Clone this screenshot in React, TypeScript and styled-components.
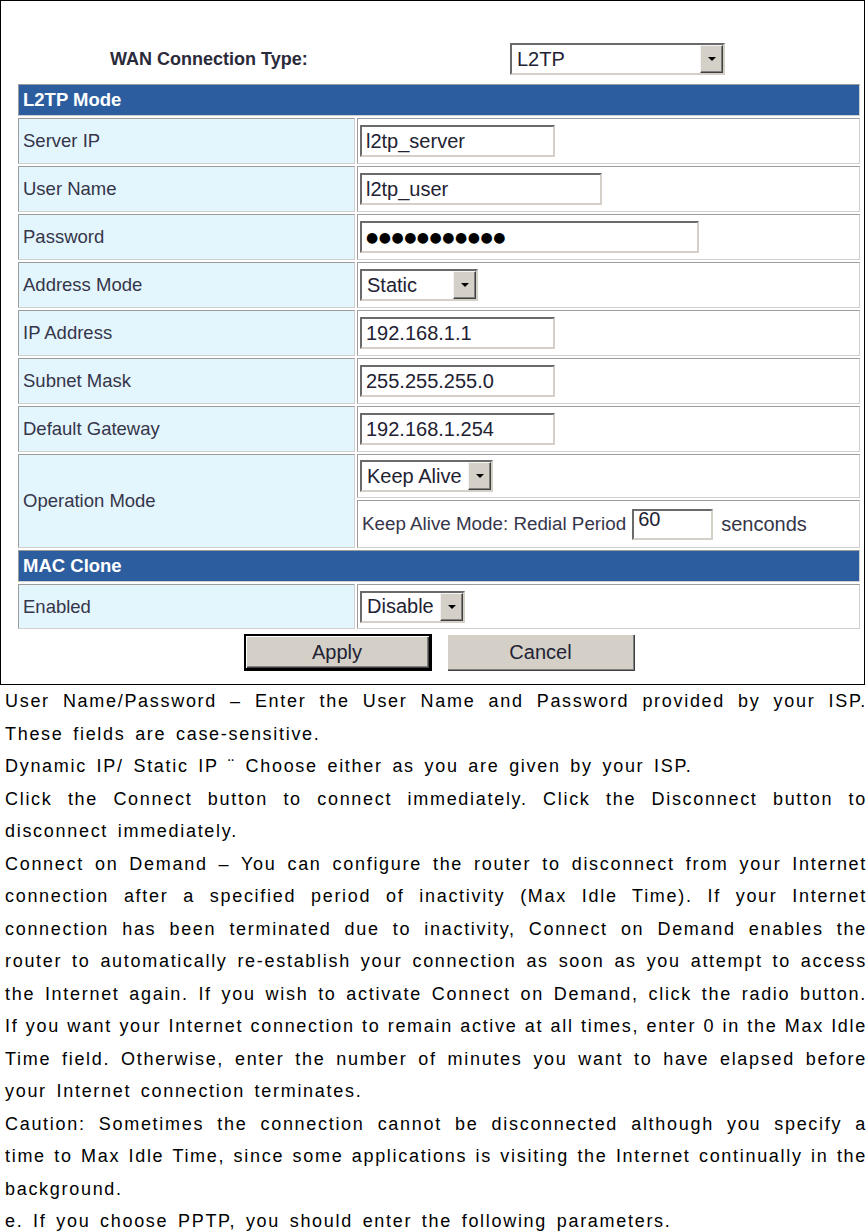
import React from "react";
import styled, { createGlobalStyle, css } from "styled-components";

const GlobalStyle = createGlobalStyle`
  html, body { margin: 0; padding: 0; background: #fff; }
  body { font-family: "Liberation Sans", Arial, sans-serif; }
`;

const Page = styled.div`
  width: 868px;
`;

const Frame = styled.div`
  box-sizing: border-box;
  width: 865px;
  height: 685px;
  border: 1px solid #000;
  padding-top: 42px;
`;

const TypeRow = styled.div`
  display: flex;
  align-items: center;
  height: 32px;
  padding-left: 109px;
`;

const TypeLabel = styled.div`
  width: 400px;
  font-size: 18px;
  font-weight: bold;
  color: #2a2a3a;
`;

const Grid = styled.div`
  display: grid;
  grid-template-columns: 337px 503px;
  grid-template-rows: 32px repeat(7, 46px) 44px 48px 32px 45px;
  gap: 2px;
  padding: 2px;
  width: 846px;
  box-sizing: border-box;
  margin: 7px 0 0 15px;
`;

const cellBase = css`
  box-sizing: border-box;
  border: 1px solid;
  border-color: #9c9c9c #d0d0d0 #d0d0d0 #9c9c9c;
  display: flex;
  align-items: center;
  min-width: 0;
`;

const SectionHeader = styled.div`
  ${cellBase};
  grid-column: 1 / -1;
  background: #2c5d9f;
  color: #fff;
  font-weight: bold;
  font-size: 18.5px;
  padding-left: 4px;
`;

const LabelCell = styled.div<{ $rows?: number }>`
  ${cellBase};
  background: #e4f6fd;
  color: #35354a;
  font-size: 18.5px;
  padding-left: 4px;
  ${(p) => p.$rows && css`grid-row: span ${p.$rows};`}
`;

const ValueCell = styled.div`
  ${cellBase};
  background: #fff;
  padding-left: 2px;
  color: #35354a;
  font-size: 18.5px;
`;

const sunken = css`
  box-sizing: border-box;
  border: 2px solid;
  border-color: #6a6a6a #d4d0c8 #d4d0c8 #6a6a6a;
  background: #fff;
`;

const TextInput = styled.input<{ $w: number; $h?: number; $high?: boolean; $dots?: boolean }>`
  ${sunken};
  width: ${(p) => p.$w}px;
  height: ${(p) => p.$h ?? 32}px;
  margin: 0;
  padding: 0 4px;
  font-family: "Liberation Sans", Arial, sans-serif;
  font-size: 20px;
  color: #222233;
  outline: none;
  ${(p) =>
    p.$high &&
    css`
      padding-bottom: 10px;
    `}
  ${(p) =>
    p.$dots &&
    css`
      font-family: "DejaVu Sans", sans-serif;
      font-size: 14px;
      letter-spacing: 0.5px;
      color: #000;
    `}
`;

const SelectBox = styled.div<{ $w: number }>`
  ${sunken};
  width: ${(p) => p.$w}px;
  height: 32px;
  display: flex;
  align-items: stretch;
`;

const SelectText = styled.span`
  flex: 1;
  display: flex;
  align-items: center;
  padding-left: 5px;
  font-size: 20px;
  color: #222233;
  white-space: nowrap;
`;

const ArrowButton = styled.span`
  box-sizing: border-box;
  width: 23px;
  background: #d4d0c8;
  border: 1px solid;
  border-color: #f4f4f4 #404040 #404040 #f4f4f4;
  box-shadow: inset -1px -1px 0 #808080;
  display: flex;
  align-items: center;
  justify-content: center;
  &::after {
    content: "";
    width: 0;
    height: 0;
    border-left: 4px solid transparent;
    border-right: 4px solid transparent;
    border-top: 4px solid #000;
  }
`;

const InlineText = styled.span<{ $big?: boolean }>`
  margin-left: 2px;
  font-size: ${(p) => (p.$big ? 20 : 18.8)}px;
  color: #35354a;
  white-space: nowrap;
`;

const RedialGroup = styled.div`
  display: flex;
  align-items: center;
  gap: 6px;
`;

const ButtonRow = styled.div`
  display: flex;
  justify-content: center;
  gap: 15px;
  width: 846px;
  margin: 3px 0 0 15px;
`;

const Button = styled.button<{ $primary?: boolean }>`
  box-sizing: border-box;
  width: 188px;
  height: 37px;
  margin: 0;
  padding: 0;
  background: #d4d0c8;
  font-family: "Liberation Sans", Arial, sans-serif;
  font-size: 20px;
  color: #222233;
  border: none;
  box-shadow: inset 1px 1px 0 #ffffff, inset -1px -1px 0 #404040, inset -2px -2px 0 #808080;
  ${(p) =>
    p.$primary &&
    css`
      border: 2px solid #000;
      border-right-width: 3px;
      border-bottom-width: 3px;
    `}
`;

const TextBlock = styled.div`
  padding-left: 5px;
  width: 862px;
  font-family: "Liberation Sans", Arial, sans-serif;
  font-size: 18px;
  letter-spacing: 1.7px;
  word-spacing: 3px;
  line-height: 32.5px;
  color: #000;
`;

const Line = styled.div<{ $fill?: boolean; $tight?: boolean }>`
  text-align: ${(p) => (p.$fill ? "justify" : "left")};
  text-align-last: ${(p) => (p.$fill ? "justify" : "left")};
  ${(p) => p.$tight && css`word-spacing: -1px;`}
`;

function Select({ w, value }: { w: number; value: string }) {
  return (
    <SelectBox $w={w}>
      <SelectText>{value}</SelectText>
      <ArrowButton />
    </SelectBox>
  );
}

const inputRows: { label: string; value: string; w: number; kind?: "dots" | "select" }[] = [
  { label: "Server IP", value: "l2tp_server", w: 195 },
  { label: "User Name", value: "l2tp_user", w: 242 },
  { label: "Password", value: "●●●●●●●●●●●", w: 339, kind: "dots" },
  { label: "Address Mode", value: "Static", w: 118, kind: "select" },
  { label: "IP Address", value: "192.168.1.1", w: 195 },
  { label: "Subnet Mask", value: "255.255.255.0", w: 195 },
  { label: "Default Gateway", value: "192.168.1.254", w: 195 },
];

const lines: { t: string; fill?: boolean; tight?: boolean }[] = [
  { t: "User Name/Password – Enter the User Name and Password provided by your ISP.", fill: true },
  { t: "These fields are case-sensitive." },
  { t: "Dynamic IP/ Static IP ¨ Choose either as you are given by your ISP." },
  { t: "Click the Connect button to connect immediately. Click the Disconnect button to", fill: true },
  { t: "disconnect immediately." },
  { t: "Connect on Demand – You can configure the router to disconnect from your Internet", fill: true },
  { t: "connection after a specified period of inactivity (Max Idle Time). If your Internet", fill: true },
  { t: "connection has been terminated due to inactivity, Connect on Demand enables the", fill: true },
  { t: "router to automatically re-establish your connection as soon as you attempt to access", fill: true, tight: true },
  { t: "the Internet again. If you wish to activate Connect on Demand, click the radio button.", fill: true, tight: true },
  { t: "If you want your Internet connection to remain active at all times, enter 0 in the Max Idle", fill: true, tight: true },
  { t: "Time field. Otherwise, enter the number of minutes you want to have elapsed before", fill: true },
  { t: "your Internet connection terminates." },
  { t: "Caution: Sometimes the connection cannot be disconnected although you specify a", fill: true },
  { t: "time to Max Idle Time, since some applications is visiting the Internet continually in the", fill: true, tight: true },
  { t: "background." },
  { t: "e. If you choose PPTP, you should enter the following parameters." },
];

export default function App() {
  return (
    <Page>
      <GlobalStyle />
      <Frame>
        <TypeRow>
          <TypeLabel>WAN Connection Type:</TypeLabel>
          <Select w={215} value="L2TP" />
        </TypeRow>
        <Grid>
          <SectionHeader>L2TP Mode</SectionHeader>
          {inputRows.map((r) => (
            <React.Fragment key={r.label}>
              <LabelCell>{r.label}</LabelCell>
              <ValueCell>
                {r.kind === "select" ? (
                  <Select w={r.w} value={r.value} />
                ) : (
                  <TextInput $w={r.w} $dots={r.kind === "dots"} defaultValue={r.value} readOnly />
                )}
              </ValueCell>
            </React.Fragment>
          ))}
          <LabelCell $rows={2}>Operation Mode</LabelCell>
          <ValueCell>
            <Select w={133} value="Keep Alive" />
          </ValueCell>
          <ValueCell>
            <RedialGroup>
              <InlineText>Keep Alive Mode: Redial Period</InlineText>
              <TextInput $w={81} $h={31} $high defaultValue="60" readOnly />
              <InlineText $big>senconds</InlineText>
            </RedialGroup>
          </ValueCell>
          <SectionHeader>MAC Clone</SectionHeader>
          <LabelCell>Enabled</LabelCell>
          <ValueCell>
            <Select w={105} value="Disable" />
          </ValueCell>
        </Grid>
        <ButtonRow>
          <Button $primary>Apply</Button>
          <Button>Cancel</Button>
        </ButtonRow>
      </Frame>
      <TextBlock>
        {lines.map((l, i) => (
          <Line key={i} $fill={l.fill} $tight={l.tight}>
            {l.t}
          </Line>
        ))}
      </TextBlock>
    </Page>
  );
}
